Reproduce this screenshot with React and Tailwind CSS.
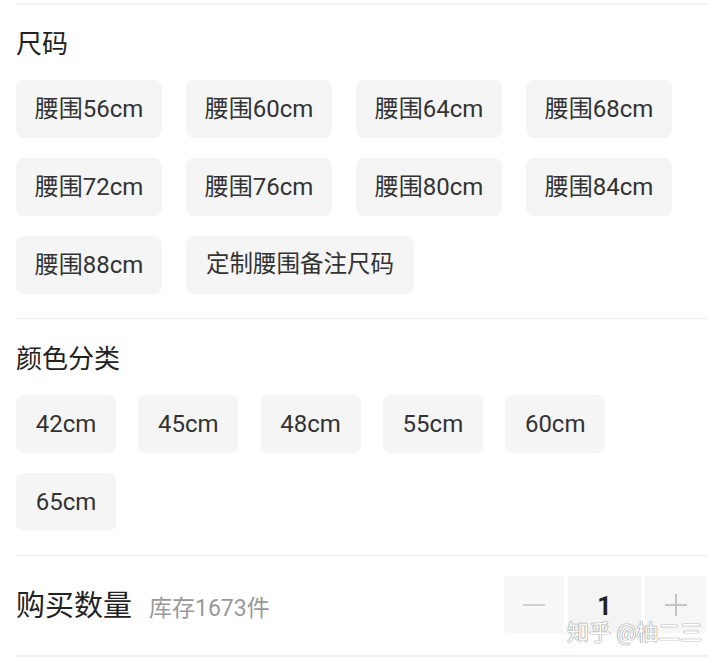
export default function App() {
  const sizes = ["腰围56cm", "腰围60cm", "腰围64cm", "腰围68cm", "腰围72cm", "腰围76cm", "腰围80cm", "腰围84cm", "腰围88cm"];
  const colors = ["42cm", "45cm", "48cm", "55cm", "60cm", "65cm"];
  const font = { fontFamily: "Roboto, 'Noto Sans CJK SC', sans-serif" };
  return (
    <div className="w-[720px] h-[663px] bg-white overflow-hidden relative" style={font}>
      <div className="pl-4 pr-3 pt-[3px]">
        <div className="border-t-2 border-[#f2f2f2]" />
        <div className="pt-[23px] pb-[24px]">
          <div className="text-[26px] leading-[32px] text-[#222] mb-[20px]">尺码</div>
          <div className="flex flex-wrap gap-x-6 gap-y-5 w-[680px]">
            {sizes.map((s) => (
              <div key={s} className="h-[58px] w-[146px] rounded-lg bg-[#f5f5f5] flex items-center justify-center text-[24px] text-[#333]">
                {s}
              </div>
            ))}
            <div className="h-[58px] w-[228px] rounded-lg bg-[#f5f5f5] flex items-center justify-center text-[23.5px] text-[#333]">
              定制腰围备注尺码
            </div>
          </div>
        </div>
        <div className="border-t border-[#eeeeee]" />
        <div className="pt-[24px] pb-[24px]">
          <div className="text-[26px] leading-[32px] text-[#222] mb-[20px]">颜色分类</div>
          <div className="flex flex-wrap gap-x-[22.3px] gap-y-5 w-[620px]">
            {colors.map((s) => (
              <div key={s} className="h-[58px] w-[100px] rounded-lg bg-[#f5f5f5] flex items-center justify-center text-[24px] text-[#333]">
                {s}
              </div>
            ))}
          </div>
        </div>
        <div className="border-t border-[#eeeeee]" />
        <div className="pt-[20px] pb-[22px] flex items-center justify-between">
          <div className="flex items-baseline pt-[4px]">
            <span className="text-[29px] text-[#222]">购买数量</span>
            <span className="ml-[17px] text-[23px] text-[#999]">库存1673件</span>
          </div>
          <div className="flex gap-[4px] h-[57px] mr-[2px]">
            <div className="w-[60px] rounded-l bg-[#f8f8f8] flex items-center justify-center">
              <div className="w-[22px] h-[2px] bg-[#d0d0d0]" />
            </div>
            <div className="w-[73px] bg-[#f4f4f4] flex items-center justify-center pt-[4px] text-[25px] font-bold text-[#222]">1</div>
            <div className="w-[61px] rounded-r bg-[#f6f6f6] flex items-center justify-center relative">
              <div className="w-[22px] h-[2px] bg-[#c4c4c4]" />
              <div className="absolute w-[2px] h-[22px] bg-[#c4c4c4]" />
            </div>
          </div>
        </div>
        <div className="border-t-2 border-[#f0f0f0]" />
      </div>
      <div
        className="absolute left-[567px] top-[619px] text-[22px] leading-[28px] text-white whitespace-nowrap"
        style={{ textShadow: "0 0 1px #888, 0 0 1px #888, 0 0 1px #999" }}
      >
        知乎 @柚二三
      </div>
    </div>
  );
}
